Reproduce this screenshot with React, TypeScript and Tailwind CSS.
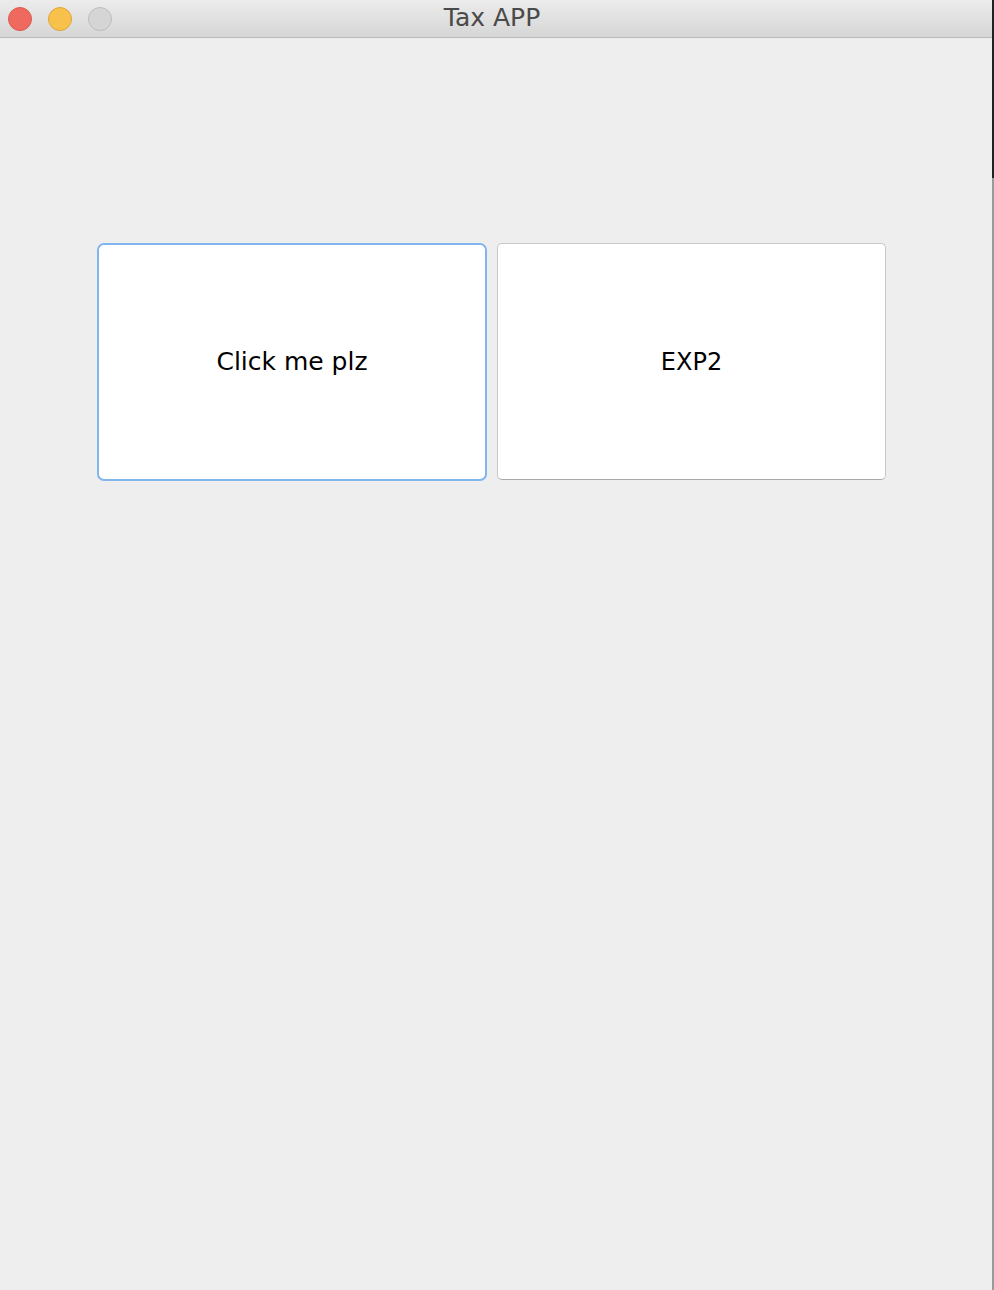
import React from "react";

const FONT = { fontFamily: '"DejaVu Sans", "Liberation Sans", sans-serif' };

function TitleBar() {
  return (
    <div className="relative flex h-[38px] items-center border-b border-[#b9b9b9] bg-gradient-to-b from-[#ececec] to-[#d6d6d6]">
      <div className="flex items-center gap-[16px] pl-[8px]">
        <span className="h-[24px] w-[24px] rounded-full border border-[#d95a50] bg-[#f0695f]" />
        <span className="h-[24px] w-[24px] rounded-full border border-[#dba63a] bg-[#f8c14c]" />
        <span className="h-[24px] w-[24px] rounded-full border border-[#bdbdbd] bg-[#d5d5d5]" />
      </div>
      <div className="flex-1 pb-[2px] pr-[120px] text-center text-[25px] leading-none text-[#4a4a4a]" style={FONT}>
        Tax APP
      </div>
    </div>
  );
}

export default function App() {
  return (
    <div className="flex h-[1290px] w-[994px] bg-[#eeeeee]" style={FONT}>
      <div className="flex flex-1 flex-col">
        <TitleBar />
        <div className="flex gap-[10px] pl-[97px] pt-[205px]">
          <button className="flex h-[238px] w-[390px] items-center justify-center rounded-[7px] border-2 border-[#82b4ee] bg-white text-[25px] text-black">
            Click me plz
          </button>
          <button className="flex h-[237px] w-[389px] items-center justify-center rounded-[5px] border border-[#c8c8c8] border-b-[#a9a9a9] bg-white text-[24px] text-black">
            EXP2
          </button>
        </div>
      </div>
      <div className="flex w-[2px] flex-col">
        <div className="h-[178px] bg-[#222222]" />
        <div className="flex-1 bg-[#9a9a9a]" />
      </div>
    </div>
  );
}
